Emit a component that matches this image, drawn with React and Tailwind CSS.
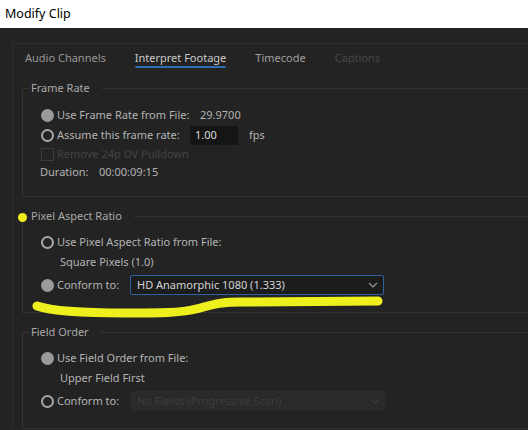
function Radio({ checked }) {
  if (checked) {
    return <span className="h-[13px] w-[13px] shrink-0 rounded-full bg-[#9a9a9a]" />;
  }
  return <span className="h-[13px] w-[13px] shrink-0 rounded-full border-2 border-[#a8a8a8]" />;
}

function Chevron({ dim }) {
  return (
    <svg width="10" height="6" viewBox="0 0 10 6" className="mr-[5px]">
      <path d="M1 1l4 4 4-4" fill="none" stroke={dim ? '#3c3c3c' : '#9a9a9a'} strokeWidth="1.2" />
    </svg>
  );
}

function Group({ title, children }) {
  return (
    <fieldset className="w-[560px] border border-[#333333] pl-[18px]">
      <legend className="-ml-[12px] pl-[2px] pr-[12px] leading-4 text-[#a9a9a9]">{title}</legend>
      {children}
    </fieldset>
  );
}

export default function App() {
  return (
    <div className="relative h-[430px] w-[528px] overflow-hidden whitespace-nowrap bg-[#232323] text-[11px] text-[#b4b4b4] font-['Noto_Sans',sans-serif]">
      <div className="flex h-[28px] items-center bg-white pl-[5px] text-[12.5px] text-black">Modify Clip</div>

      <div className="pl-[12px] pt-[15px]">
        <div className="w-[580px] border-l border-t border-[#2e2e2e] pl-[9px]">
          {/* tabs */}
          <div className="flex gap-[29px] pl-[3px] pt-[6px] leading-4">
            <span className="text-[#979797]">Audio Channels</span>
            <span className="flex flex-col text-[#cacaca]">
              Interpret Footage
              <span className="h-[2px] rounded-full bg-[#2f6db3]" />
            </span>
            <span className="text-[#a0a0a0]">Timecode</span>
            <span className="text-[#474747]">Captions</span>
          </div>

          <div className="mt-[12px] flex flex-col gap-[11px]">
            <Group title="Frame Rate">
              <div className="pt-[9px] pb-[15px]">
                <div className="flex h-[20px] items-center">
                  <Radio checked />
                  <span className="ml-[3px] w-[133px]">Use Frame Rate from File:</span>
                  <span className="pl-[10px]">29.9700</span>
                </div>
                <div className="flex h-[20px] items-center">
                  <Radio />
                  <span className="ml-[3px] w-[133px]">Assume this frame rate:</span>
                  <span className="flex h-[19px] w-[48px] items-center bg-[#151515] pl-[5px] text-[#dcdcdc]">1.00</span>
                  <span className="ml-[11px]">fps</span>
                </div>
                <div className="flex h-[18px] items-center">
                  <span className="h-[13px] w-[13px] shrink-0 border border-[#3b3b3b]" />
                  <span className="ml-[3px] text-[#434343]">Remove 24p DV Pulldown</span>
                </div>
                <div className="-ml-px flex h-[18px] items-center">
                  <span className="w-[59px]">Duration:</span>
                  <span>00:00:09:15</span>
                </div>
              </div>
            </Group>

            <Group title="Pixel Aspect Ratio">
              <div className="pt-[8px] pb-[17px]">
                <div className="flex h-[20px] items-center">
                  <Radio />
                  <span className="ml-[3px]">Use Pixel Aspect Ratio from File:</span>
                </div>
                <div className="flex h-[20px] items-center pl-[19px]">Square Pixels (1.0)</div>
                <div className="mt-[3px] flex h-[20px] items-center">
                  <Radio checked />
                  <span className="ml-[3px] w-[73px]">Conform to:</span>
                  <div className="flex h-[20px] w-[254px] items-center justify-between rounded-[2px] border border-[#2c62a3] bg-[#1c1c1c] pl-[6px] text-[#d4d4d4]">
                    HD Anamorphic 1080 (1.333)
                    <Chevron />
                  </div>
                </div>
              </div>
            </Group>

            <Group title="Field Order">
              <div className="pt-[8px] pb-[17px]">
                <div className="flex h-[20px] items-center">
                  <Radio checked />
                  <span className="ml-[3px]">Use Field Order from File:</span>
                </div>
                <div className="flex h-[20px] items-center pl-[19px]">Upper Field First</div>
                <div className="mt-[3px] flex h-[20px] items-center">
                  <Radio />
                  <span className="ml-[3px] w-[73px]">Conform to:</span>
                  <div className="flex h-[20px] w-[255px] items-center justify-between rounded-[2px] bg-[#2a2a2a] pl-[7px] text-[#3d3d3d]">
                    No Fields (Progressive Scan)
                    <Chevron dim />
                  </div>
                </div>
              </div>
            </Group>
          </div>
        </div>
      </div>

      {/* highlighter annotation */}
      <svg className="pointer-events-none absolute left-0 top-0" width="528" height="430">
        <circle cx="22.5" cy="217.5" r="4.5" fill="#f1ec1c" />
        <path
          d="M37 306 C55 312 90 313 125 313 S180 313 196 309 S218 302 242 302 L378 301"
          fill="none"
          stroke="#eef01e"
          strokeWidth="9"
          strokeLinecap="round"
          strokeLinejoin="round"
        />
      </svg>
    </div>
  );
}
